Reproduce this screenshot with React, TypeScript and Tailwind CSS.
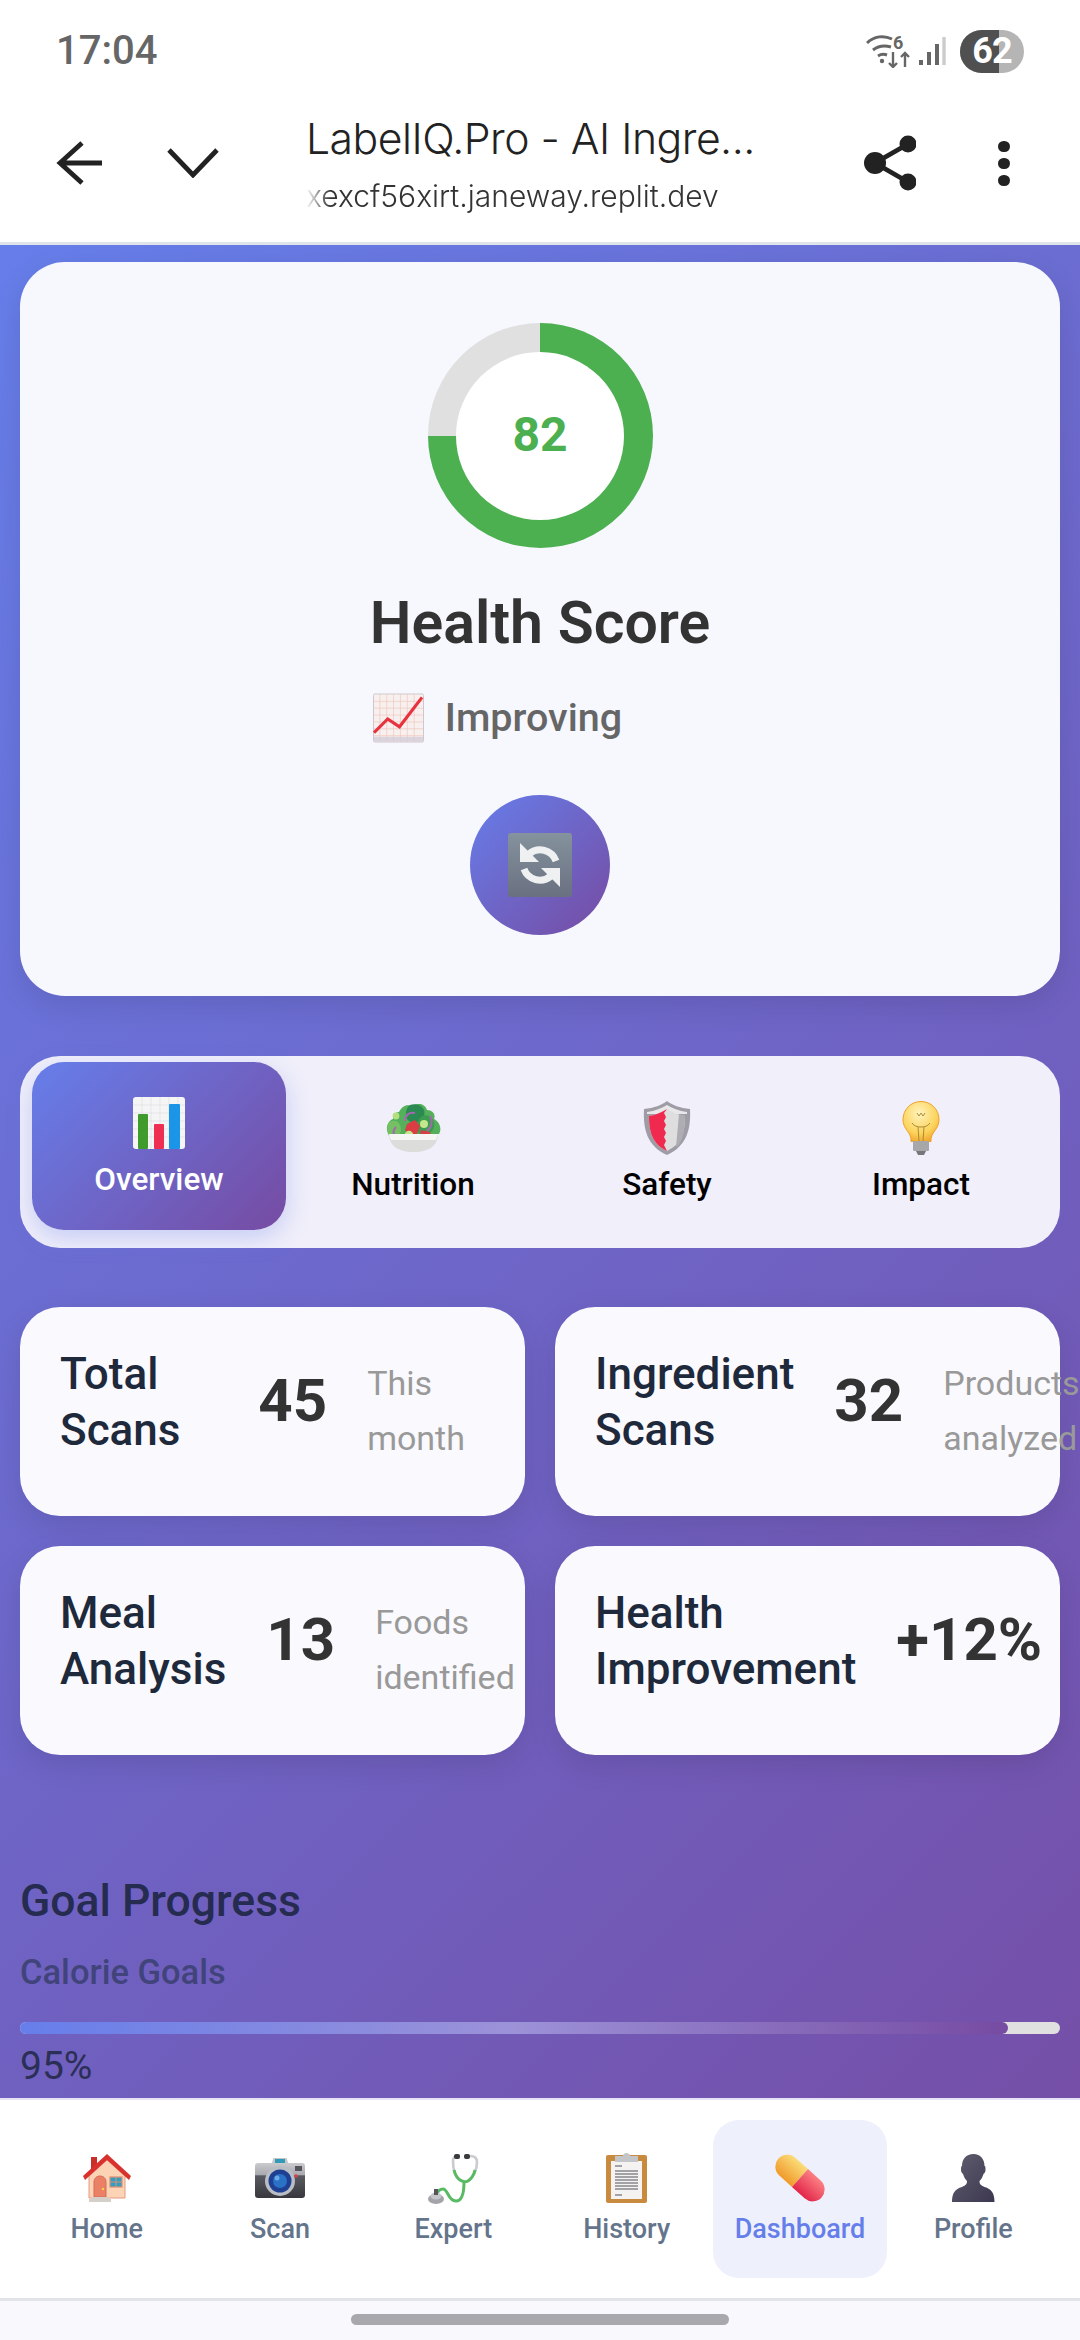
import { ReactNode } from "react";

const brandGradient = "bg-[linear-gradient(135deg,#667eea_0%,#764ba2_100%)]";

function ChartUp({ className }: { className?: string }) {
  return (
    <svg viewBox="0 0 52 50" className={className}>
      <rect x="0.5" y="0.5" width="51" height="49" rx="1.5" fill="#f7f0ee" stroke="#cfc6cc" />
      <path d="M7 1v48M14 1v48M21 1v48M28 1v48M35 1v48M42 1v48M1 8h50M1 15h50M1 22h50M1 29h50M1 36h50M1 43h50" stroke="#efc7bd" strokeWidth="0.7" />
      <path d="M1 44h50v5H1z" fill="#d3cdd8" opacity="0.8" />
      <path d="M1 40l14-14 12 8L50 4" fill="none" stroke="#e8333f" strokeWidth="3.2" />
    </svg>
  );
}

function RefreshBox({ className }: { className?: string }) {
  return (
    <svg viewBox="0 0 64 64" className={className}>
      <defs>
        <linearGradient id="refreshBg" x1="0" y1="0" x2="0" y2="1">
          <stop offset="0" stopColor="#84939e" />
          <stop offset="1" stopColor="#6a7080" />
        </linearGradient>
      </defs>
      <rect width="64" height="64" rx="3" fill="url(#refreshBg)" />
      <path d="M48 28A17 17 0 0 0 21 21" fill="none" stroke="#eef0f1" strokeWidth="7" />
      <path d="M12 10v19h19z" fill="#eef0f1" />
      <path d="M16 36A17 17 0 0 0 43 43" fill="none" stroke="#eef0f1" strokeWidth="7" />
      <path d="M52 54V35H33z" fill="#eef0f1" />
    </svg>
  );
}

function BarChart({ className }: { className?: string }) {
  return (
    <svg viewBox="0 0 52 52" className={className}>
      <rect width="52" height="52" rx="3" fill="#f5f5f6" />
      <path d="M0 8h52M0 16h52M0 24h52M0 32h52M0 40h52M9 0v52M18 0v52M27 0v52M36 0v52M45 0v52" stroke="#dcdce0" strokeWidth="0.6" />
      <rect x="5" y="17" width="10" height="35" rx="1" fill="#3e9b2c" />
      <rect x="21" y="27" width="10" height="25" rx="1" fill="#ee2f51" />
      <rect x="36" y="7" width="11" height="45" rx="1" fill="#1b95e8" />
    </svg>
  );
}

function Salad({ className }: { className?: string }) {
  return (
    <svg viewBox="0 0 55 48" className={className}>
      <path d="M13 8c3-6 9-9 13-5 5-5 13-4 15 3 6 0 9 5 7 9 6 3 8 10 5 15H3C-1 26 1 17 7 15c0-4 2-7 6-7z" fill="#55b05c" />
      <path d="M24 1c5-2 12 0 14 5 2 6-2 12-9 13-6 0-10-5-9-10 0-3 2-7 4-8z" fill="#2a8a52" />
      <path d="M2 20c3-5 10-4 12 1 2 5 1 9-3 11H3c-2-3-2-8-1-12z" fill="#74c063" />
      <path d="M36 12c6-2 10 1 12 6 1 5-1 9-5 12H33c-3-6-2-15 3-18z" fill="#3c9c4f" />
      <path d="M21 20l8-4 5 6-3 8-8 2-4-6z" fill="#dc3c44" />
      <path d="M35 26l9 2 2 7H34z" fill="#dc3c44" />
      <circle cx="23" cy="31" r="4.2" fill="#c4e68c" />
      <circle cx="38" cy="20" r="4" fill="#c4e68c" />
      <circle cx="10" cy="12" r="3.4" fill="#b5df7c" />
      <path d="M19 17c0-6 4-9 10-8M44 12c3 5 2 11-3 15M9 34c-2-4-2-8 1-11" stroke="#a568b0" strokeWidth="2" fill="none" />
      <path d="M3 30h49c0 10-7 18-24.500 18S3 40 3 30z" fill="#dcdcdb" />
      <path d="M3 30h49c-.4 2-1 4-2 6H5c-1-2-1.600-4-2-6z" fill="#f6f6f5" />
    </svg>
  );
}

function Shield({ className }: { className?: string }) {
  return (
    <svg viewBox="0 0 48 54" className={className}>
      <path d="M24 0c5 4 13 7 23 8 1 20-3 37-23 46C4 45 0 28 1 8c10-1 18-4 23-8z" fill="#9f9ca6" />
      <path d="M24 4c5 3 12 6 20 7v2H4v-2c8-1 15-4 20-7z" fill="#e8e8ea" />
      <path d="M24 8c5 3 11 6 18 7 0 15-3 28-18 35C9 43 6 30 6 15c7-1 13-4 18-7z" fill="#dededf" />
      <path d="M36 13l6 2c0 15-3 28-9 31z" fill="#aeadb4" />
      <path d="M24 8l-3 4 2 4-2 4 2 4-2 4 2 4-2 4 2 4-2 4 3 6C9 43 6 30 6 15c7-1 13-4 18-7z" fill="#f02a4f" />
    </svg>
  );
}

function Bulb({ className }: { className?: string }) {
  return (
    <svg viewBox="0 0 38 54" className={className}>
      <defs>
        <radialGradient id="bulbGlow" cx="0.45" cy="0.3" r="0.75">
          <stop offset="0" stopColor="#fff3bd" />
          <stop offset="0.65" stopColor="#fcd45c" />
          <stop offset="1" stopColor="#f0a328" />
        </radialGradient>
      </defs>
      <path d="M19 0.500c10 0 18 8 18 18 0 8-5 11-7 16-1 2-1 4-1 6H9c0-2 0-4-1-6-2-5-7-8-7-16C1 8.500 9 .500 19 .500z" fill="url(#bulbGlow)" stroke="#eda22c" />
      <path d="M10 22c2 3 5 4 9 4s7-1 9-4M16 26l1 14M22 26l-1 14M15 12l2 3 2-3 2 3 2-3" stroke="#a5812f" strokeWidth="0.9" fill="none" />
      <rect x="11" y="40" width="16" height="10" rx="1" fill="#a7a6a9" />
      <path d="M14 50h10l-2 4h-6z" fill="#77767b" />
    </svg>
  );
}

function House({ className }: { className?: string }) {
  return (
    <svg viewBox="0 0 48 48" className={className}>
      <path d="M6 22L24 6l18 16v22H6z" fill="#fcd3b4" stroke="#e79a84" />
      <rect x="8" y="3" width="6" height="12" fill="#c9302c" />
      <path d="M24 0l24 22-2 4L24 6 2 26l-2-4z" fill="#d9322e" />
      <path d="M11 43V28c0-8 12-8 12 0v15z" fill="#ea8066" stroke="#d86d55" />
      <circle cx="20" cy="35" r="1.200" fill="#fcd24c" />
      <rect x="27" y="23" width="12" height="10" fill="#2f9fc4" stroke="#e18d70" strokeWidth="1.200" />
      <path d="M33 23v10M27 28h12" stroke="#e18d70" strokeWidth="1" />
      <path d="M9 43h17v2h2v3H6v-3h3z" fill="#d5cfc9" />
    </svg>
  );
}

function Camera({ className }: { className?: string }) {
  return (
    <svg viewBox="0 0 50 40" className={className}>
      <defs>
        <linearGradient id="camBody" x1="0" y1="0" x2="0" y2="1">
          <stop offset="0" stopColor="#c9cbcf" />
          <stop offset="0.35" stopColor="#a7a9ae" />
          <stop offset="0.36" stopColor="#5a5a62" />
          <stop offset="1" stopColor="#37373d" />
        </linearGradient>
      </defs>
      <path d="M17 5l1-4c0-.500.500-1 1-1h12c.500 0 1 .500 1 1l1 4z" fill="#c4c6ca" />
      <rect x="20" y="1" width="10" height="4" fill="#2f9bb8" />
      <rect y="5" width="50" height="35" rx="3" fill="url(#camBody)" />
      <rect x="40" y="8" width="7" height="5" fill="#55555b" />
      <circle cx="25" cy="23" r="15" fill="#b9bdc4" />
      <circle cx="25" cy="23" r="11.500" fill="#1f3f93" />
      <circle cx="25" cy="23" r="7" fill="#2a72c6" />
      <circle cx="22" cy="20" r="2.500" fill="#6aa8e6" />
      <circle cx="41" cy="18" r="1.800" fill="#d8414a" />
    </svg>
  );
}

function Stethoscope({ className }: { className?: string }) {
  return (
    <svg viewBox="0 0 51 52" className={className}>
      <path d="M30 4c-3 0-5 1-5 5 0 6 1 14 6 19M42 4c3 0 7 1 7 6 0 7-3 14-9 19" fill="none" stroke="#c9cbce" strokeWidth="2.600" />
      <path d="M26 18c1 4 3 8 6 10 3 2 6 2 8 1 3-2 6-6 7-11M36 30c0 9-1 19-8 19-8 0-8-12-13-12-3 0-5 2-6 5" fill="none" stroke="#58bb63" strokeWidth="3" />
      <rect x="26" y="2" width="6" height="5" rx="2" fill="#3a3a3d" />
      <rect x="36" y="2" width="6" height="5" rx="2" fill="#3a3a3d" />
      <ellipse cx="8" cy="47" rx="8" ry="5" fill="#a2a4a9" />
      <ellipse cx="8" cy="44" rx="5.500" ry="3.500" fill="#c4c6ca" />
      <rect x="6" y="37" width="4" height="6" fill="#55555a" />
    </svg>
  );
}

function Clipboard({ className }: { className?: string }) {
  return (
    <svg viewBox="0 0 41 50" className={className}>
      <rect y="2" width="41" height="48" rx="2" fill="#c88a3e" />
      <rect x="5" y="8" width="31" height="38" fill="#f4f3f1" />
      <path d="M9 18h23M9 21h23M9 24h23M9 27h23M9 30h23M9 33h23M9 36h23" stroke="#85878d" strokeWidth="1.500" />
      <path d="M9 13h7M9 42h7" stroke="#85878d" strokeWidth="1.500" />
      <path d="M9 3h8c0-4 7-4 7 0h8v6H9z" fill="#c3c5c9" />
    </svg>
  );
}

function Pill({ className }: { className?: string }) {
  return (
    <svg viewBox="0 0 50 50" className={className}>
      <defs>
        <linearGradient id="pillA" x1="0" y1="0" x2="0" y2="1">
          <stop offset="0" stopColor="#fbdd7a" />
          <stop offset="1" stopColor="#f09a2a" />
        </linearGradient>
        <linearGradient id="pillB" x1="0" y1="0" x2="0" y2="1">
          <stop offset="0" stopColor="#fb8082" />
          <stop offset="1" stopColor="#e2264a" />
        </linearGradient>
      </defs>
      <g transform="rotate(42 25 25)">
        <path d="M25 13H8A12 12 0 0 0 8 37H25z" fill="url(#pillA)" />
        <path d="M25 13H42A12 12 0 0 1 42 37H25z" fill="url(#pillB)" />
      </g>
    </svg>
  );
}

function Silhouette({ className }: { className?: string }) {
  return (
    <svg viewBox="0 0 43 48" className={className}>
      <defs>
        <linearGradient id="bust" x1="0" y1="0" x2="1" y2="1">
          <stop offset="0" stopColor="#5f5e6e" />
          <stop offset="1" stopColor="#3c3750" />
        </linearGradient>
      </defs>
      <path d="M21.500 0c7 0 11 5 11 12 1 0 1 2 1 4 0 2-1 3-2 4-1 3-2 5-4 7 0 3 1 4 5 6 7 2 10 6 10 15H0c0-9 3-13 10-15 4-2 5-3 5-6-2-2-3-4-4-7-1-1-2-2-2-4s0-4 1-4c0-7 4-12 11.500-12z" fill="url(#bust)" />
    </svg>
  );
}

function StatCard({ label, value, sub }: { label: ReactNode; value: string; sub?: ReactNode }) {
  return (
    <div className="flex h-[209px] items-center gap-10 rounded-[40px] bg-[#f9f9fe] p-10 shadow-[0_10px_30px_rgba(0,0,0,0.1)]">
      <div className="mb-[20px] text-[44px] leading-[56px] font-medium text-[#1e293b]">{label}</div>
      <div className="mb-[22px] text-[60px] leading-[70px] font-bold text-[#333]">{value}</div>
      {sub && <div className="mb-[2px] text-[34px] leading-[55px] text-[#999]">{sub}</div>}
    </div>
  );
}

const tabs = [
  { name: "Nutrition", Icon: Salad, size: "w-[55px] h-[48px]" },
  { name: "Safety", Icon: Shield, size: "w-[48px] h-[54px]" },
  { name: "Impact", Icon: Bulb, size: "w-[38px] h-[54px]" },
];

const navItems = [
  { name: "Home", Icon: House, size: "w-[48px] h-[48px]" },
  { name: "Scan", Icon: Camera, size: "w-[50px] h-[40px]" },
  { name: "Expert", Icon: Stethoscope, size: "w-[51px] h-[52px]" },
  { name: "History", Icon: Clipboard, size: "w-[41px] h-[50px]" },
  { name: "Dashboard", Icon: Pill, size: "w-[50px] h-[50px]", active: true },
  { name: "Profile", Icon: Silhouette, size: "w-[43px] h-[48px]" },
];

export default function App() {
  return (
    <div className="flex h-[2340px] w-[1080px] flex-col overflow-hidden bg-white font-['Roboto',sans-serif]">
      {/* status bar */}
      <div className="flex h-[100px] shrink-0 items-center justify-between pr-[56px] pl-[56px] pt-[2px]">
        <span className="text-[40px] font-medium text-[#666]">17:04</span>
        <div className="flex items-center gap-[10px]">
          <svg viewBox="0 0 84 34" className="h-[34px] w-[84px]" fill="none" stroke="#666">
            <path d="M1 9C8 2 18 1 26 5M7 16c5-4 11-5 18-3M12 22c3-2 6-2 9-1" strokeWidth="3" />
            <circle cx="16" cy="27" r="2.200" fill="#666" stroke="none" />
            <text x="27" y="15" fontSize="18" fontWeight="700" fill="#666" stroke="none">6</text>
            <path d="M27 18v15m-4-4l4 4 4-4M39 33V19m-4 4l4-4 4 4" strokeWidth="2.400" />
            <path d="M55 31v-5M63 31V18M71 31V10" strokeWidth="4" />
            <path d="M78 31V3" strokeWidth="3.400" stroke="#ccc" />
          </svg>
          <div className="relative flex h-[43px] w-[64px] items-center justify-center overflow-hidden rounded-[22px] bg-[#b5b5b5] text-[36px] leading-none font-bold tracking-[-1px] text-white">
            <div className="absolute inset-y-0 left-0 w-[39px] bg-[#505050]" />
            <span className="relative">62</span>
          </div>
        </div>
      </div>

      {/* browser bar */}
      <div className="flex h-[142px] shrink-0 items-center pb-[16px]">
        <svg viewBox="0 0 46 44" className="ml-[56px] h-[44px] w-[46px] shrink-0" fill="none" stroke="#222" strokeWidth="4.800">
          <path d="M26 2L4 22l22 20M4 22h42" />
        </svg>
        <svg viewBox="0 0 52 30" className="ml-[65px] h-[30px] w-[52px] shrink-0" fill="none" stroke="#222" strokeWidth="4.800">
          <path d="M2 2l24 25L50 2" />
        </svg>
        <div className="mt-[3px] ml-[87px] w-[500px] shrink-0 font-['Inter',sans-serif]">
          <div className="text-[42.7px] leading-[50px] font-light tracking-[-0.5px] text-[#222]">LabelIQ.Pro - AI Ingre...</div>
          <div className="mt-[12px] text-[30px] leading-[40px] font-light text-[#333] [mask-image:linear-gradient(to_right,transparent,black_24px)]">
            xexcf56xirt.janeway.replit.dev
          </div>
        </div>
        <svg viewBox="0 0 52 56" className="ml-[58px] h-[56px] w-[52px] shrink-0" fill="#222">
          <circle cx="44" cy="9" r="8.500" />
          <circle cx="11" cy="28" r="11" />
          <circle cx="44" cy="47" r="8.500" />
          <path d="M44 9L11 28l33 19" fill="none" stroke="#222" strokeWidth="4.800" />
        </svg>
        <div className="ml-[82px] flex shrink-0 flex-col gap-[6px]">
          <div className="h-[11px] w-[12px] rounded-full bg-[#222]" />
          <div className="h-[11px] w-[12px] rounded-full bg-[#222]" />
          <div className="h-[11px] w-[12px] rounded-full bg-[#222]" />
        </div>
      </div>
      <div className="h-[3px] shrink-0 bg-[#dfe3ea]" />

      <div className={`min-h-0 flex-1 overflow-hidden bg-[length:100%_2095px] px-5 pt-[17px] ${brandGradient}`}>
        <div className="flex h-[734px] flex-col items-center rounded-[45px] bg-[#f7f8fe] pt-[61px] shadow-[0_10px_30px_rgba(0,0,0,0.1)]">
          <div className="flex h-[225px] w-[225px] items-center justify-center rounded-full bg-[conic-gradient(#4caf50_0deg,#4caf50_270deg,#e0e0e0_270deg)]">
            <div className="flex h-[168px] w-[168px] items-center justify-center rounded-full bg-white pb-[2px] text-[48px] font-bold text-[#4caf50]">82</div>
          </div>
          <div>
            <div className="mt-[39px] text-[59px] leading-[72px] font-semibold text-[#333]">Health Score</div>
            <div className="mt-[34px] ml-[3px] flex items-center gap-[21px]">
              <ChartUp className="h-[50px] w-[51px]" />
              <span className="text-[39.5px] leading-[48px] font-medium text-[#666]">Improving</span>
            </div>
          </div>
          <div className={`mt-[52px] flex h-[140px] w-[140px] items-center justify-center rounded-full ${brandGradient}`}>
            <RefreshBox className="h-[64px] w-[64px]" />
          </div>
        </div>

        <div className="mt-[60px] grid h-[192px] grid-cols-4 rounded-[40px] bg-[#f0effa] p-3">
          <div className={`flex h-[168px] -translate-y-[6px] flex-col items-center rounded-[32px] pt-[35px] shadow-[0_8px_25px_rgba(102,126,234,0.3)] ${brandGradient}`}>
            <BarChart className="h-[52px] w-[52px]" />
            <span className="mt-[11px] text-[31.5px] leading-[40px] font-medium text-white">Overview</span>
          </div>
          {tabs.map(({ name, Icon, size }) => (
            <div key={name} className="flex h-[168px] flex-col items-center pt-[32px]">
              <div className="flex h-[56px] items-center">
                <Icon className={size} />
              </div>
              <span className="mt-[9px] text-[31.5px] leading-[40px] font-medium text-black">{name}</span>
            </div>
          ))}
        </div>

        <div className="mt-[59px] grid grid-cols-2 gap-[30px]">
          <StatCard label="Total Scans" value="45" sub="This month" />
          <StatCard label="Ingredient Scans" value="32" sub="Products analyzed" />
          <StatCard label="Meal Analysis" value="13" sub="Foods identified" />
          <StatCard label="Health Improvement" value="+12%" />
        </div>

        <div className="mt-[121px] text-[44.5px] leading-[50px] font-medium text-[#262b50]">Goal Progress</div>
        <div className="mt-[24px] text-[34.5px] leading-[44px] font-medium text-[#41447a]">Calorie Goals</div>
        <div className="mt-[28px] h-[12px] rounded-full bg-[#e0e0e0]">
          <div className="h-full w-[95%] rounded-full bg-[linear-gradient(90deg,#667eea,#9c92d8_50%,#764ba2)]" />
        </div>
        <div className="mt-[10px] text-[39px] leading-[44px] text-[#2b2f55]">95%</div>
      </div>

      {/* bottom nav */}
      <div className="h-[2px] shrink-0 bg-[#e5e3f5]" />
      <div className="grid h-[198px] shrink-0 grid-cols-6 bg-white px-5 py-[20px]">
        {navItems.map(({ name, Icon, size, active }) => (
          <div key={name} className={`flex h-[158px] flex-col items-center rounded-[26px] pt-[32px] ${active ? "bg-[#eef0fc]" : ""}`}>
            <div className="flex h-[52px] items-center">
              <Icon className={size} />
            </div>
            <span className={`mt-[7px] text-[27px] leading-[36px] font-medium ${active ? "text-[#667eea]" : "text-[#64748b]"}`}>{name}</span>
          </div>
        ))}
      </div>
      <div className="h-[3px] shrink-0 bg-[#e2e3e8]" />
      <div className="flex h-[39px] shrink-0 justify-center bg-[#f8f8fd] pt-[13px]">
        <div className="h-[11px] w-[378px] rounded-full bg-[#a9a8ad]" />
      </div>
    </div>
  );
}
